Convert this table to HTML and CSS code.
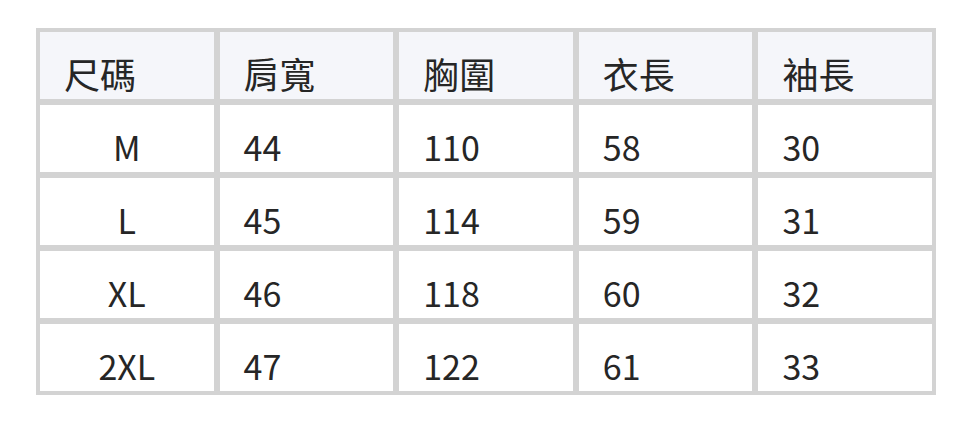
FILE: index.html
```html
<!DOCTYPE html>
<html lang="zh-Hant">
<head>
<meta charset="utf-8">
<title>尺碼表</title>
<link rel="stylesheet" href="styles.css">
</head>
<body>
<div class="wrap">
<table class="size-table">
  <thead>
    <tr><th>尺碼</th><th>肩寬</th><th>胸圍</th><th>衣長</th><th>袖長</th></tr>
  </thead>
  <tbody>
    <tr><td class="size">M</td><td>44</td><td>110</td><td>58</td><td>30</td></tr>
    <tr><td class="size">L</td><td>45</td><td>114</td><td>59</td><td>31</td></tr>
    <tr><td class="size">XL</td><td>46</td><td>118</td><td>60</td><td>32</td></tr>
    <tr><td class="size">2XL</td><td>47</td><td>122</td><td>61</td><td>33</td></tr>
  </tbody>
</table>
</div>
</body>
</html>
```
FILE: styles.css
```css
html, body {
  margin: 0;
  padding: 0;
  background: #ffffff;
}
.wrap {
  padding: 28px 0 0 36px;
}
.size-table {
  width: 900px;
  table-layout: fixed;
  border-collapse: separate;
  border-spacing: 0;
  border: 1px solid #d3d3d3;
  font-family: "Noto Sans CJK TC", "Noto Sans", sans-serif;
  font-size: 34px;
  color: #262626;
}
.size-table th,
.size-table td {
  border: 3px solid #d3d3d3;
  padding: 22px 8px 5px 24px;
  height: 40px;
  line-height: 40px;
  text-align: left;
  vertical-align: top;
  font-weight: 400;
  white-space: nowrap;
}
.size-table th {
  background: #f5f6fa;
  font-size: 36px;
  padding-top: 21px;
  padding-bottom: 6px;
}
.size-table td.size {
  text-align: center;
  padding-left: 8px;
}
```
